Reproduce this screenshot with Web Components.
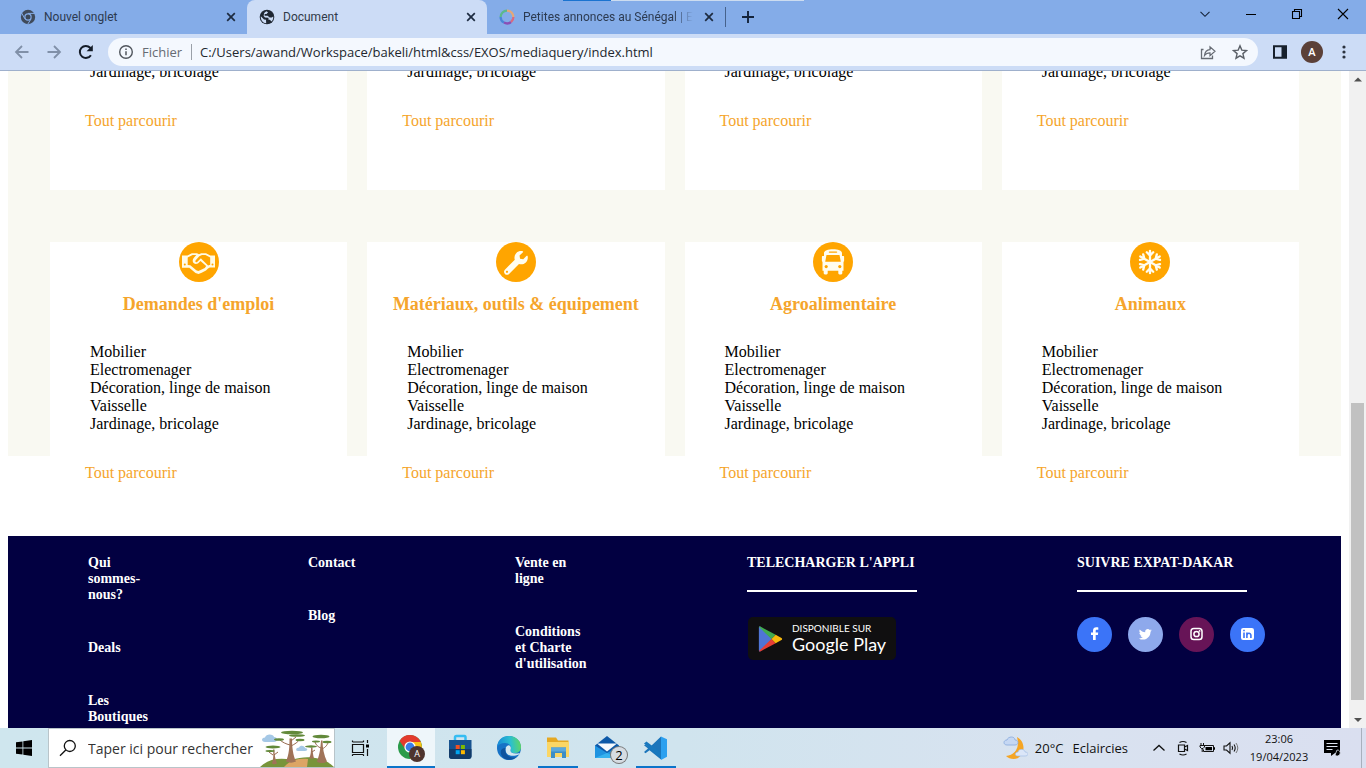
<!DOCTYPE html>
<html lang="fr">
<head>
<meta charset="utf-8">
<title>Document</title>
<style>
html, body { margin: 0; height: 100%; }
body { overflow: hidden; font-family: "Open Sans", "Noto Sans", sans-serif; color: #1f2328; }
</style>
</head>
<body>
<desktop-screen></desktop-screen>
<script>
const ICONS = {
  chromeGray: ['0 0 16 16', '<circle cx="8" cy="8" r="7.2" fill="#3f4a5a"/><circle cx="8" cy="8" r="3.700" fill="#84ace8"/><circle cx="8" cy="8" r="2.5" fill="#3c4858"/><g stroke="#84ace8" stroke-width="1"><path d="M8 4.4h7M4.9 9.8 1.5 3.8M11.1 9.8 7.6 15.4"/></g>'],
  globe: ['0 0 16 16', '<circle cx="8" cy="8" r="7.3" fill="#1f2733"/><path d="M1.8 7.2 5 10.4l2 .3.2 3.6C4 13.8 1.6 11.5 1.8 7.200zM7.300 2.200l1.800 1-1.600 1.700H5.600v1.800h3l2 1.700h2.200l1.400-1c.3 2-.4 3.900-1.700 5.200l-1.600-1.800H9.500V8.800L6 8.400 4.600 7l.6-3z" fill="#ccdcf6"/>'],
  ring: ['0 0 16 16', '<g fill="none" stroke-width="2.300"><path d="M8 1.600A6.400 6.400 0 0 0 1.600 8" stroke="#5bb98c"/><path d="M1.600 8A6.400 6.400 0 0 0 5 13.600" stroke="#4a86d8"/><path d="M5 13.600A6.400 6.400 0 0 0 12 13" stroke="#8a4fb5"/><path d="M12 13A6.400 6.400 0 0 0 14.400 8" stroke="#d86a80"/><path d="M14.400 8A6.400 6.400 0 0 0 8 1.600" stroke="#e3a878"/></g>'],
  close: ['0 0 16 16', '<path d="M4.200 4.200l7.600 7.600m0-7.600-7.600 7.600" stroke="#1d2b40" stroke-width="1.700"/>'],
  plus: ['0 0 16 16', '<path d="M8 2v12M2 8h12" stroke="#13233b" stroke-width="1.900"/>'],
  chevDown: ['0 0 16 16', '<path d="m3.500 5.800 4.500 4.500 4.500-4.500" fill="none" stroke="#142238" stroke-width="1.100"/>'],
  minimize: ['0 0 16 16', '<path d="M3 8.500h10" stroke="#000"/>'],
  restore: ['0 0 16 16', '<path d="M3.500 5.500h7v7h-7zM5.500 5.500v-2h7v7h-2" fill="none" stroke="#000" stroke-width="1.100"/>'],
  winClose: ['0 0 16 16', '<path d="m3 3 10 10m0-10L3 13" stroke="#000" stroke-width="1.100"/>'],
  back: ['0 0 16 16', '<path d="M14.500 8H2m6-6L2 8l6 6" fill="none" stroke="#8090a8" stroke-width="1.800"/>'],
  forward: ['0 0 16 16', '<path d="M1.500 8H14M8 2l6 6-6 6" fill="none" stroke="#8090a8" stroke-width="1.800"/>'],
  reload: ['0 0 16 16', '<path d="M12.900 11.200A6 6 0 1 1 12.200 3.800l1 1" fill="none" stroke="#141c28" stroke-width="2"/><path d="M14.800 1v6.200H8.600z" fill="#141c28"/>'],
  info: ['0 0 16 16', '<circle cx="8" cy="8" r="6.300" fill="none" stroke="#51565d" stroke-width="1.400"/><path d="M8 7.200v4.100M8 4.500v1.500" stroke="#51565d" stroke-width="1.500"/>'],
  share: ['0 0 16 16', '<path d="M3.500 5.500h-2v9h11v-3" fill="none" stroke="#666b73" stroke-width="1.300"/><path d="M4.500 11.500c.4-3.500 2.200-5.600 5.500-5.900V2.800l5 4.500-5 4.300V8.800c-2.400 0-4.100.8-5.500 2.700z" fill="none" stroke="#666b73" stroke-width="1.200"/>'],
  star: ['0 0 16 16', '<path d="m8 1.800 1.800 4.300 4.700.4-3.600 3.100 1.100 4.600L8 11.800l-4 2.400 1.100-4.600-3.600-3.100 4.700-.4z" fill="none" stroke="#5b6068" stroke-width="1.400"/>'],
  side: ['0 0 16 16', '<path d="M2 2.200h12v11.600H2z" fill="none" stroke="#17202c" stroke-width="2"/><path d="M9.500 2h5v12h-5z" fill="#17202c"/>'],
  dots: ['0 0 16 16', '<g fill="#2b333f"><circle cx="8" cy="3" r="1.600"/><circle cx="8" cy="8" r="1.600"/><circle cx="8" cy="13" r="1.600"/></g>'],
  up: ['0 0 16 16', '<path d="m4 10.500 4-4 4 4z" fill="#505050"/>'],
  down: ['0 0 16 16', '<path d="m4 6 4 4 4-4z" fill="#505050"/>'],
  handshake: ['0 0 40 40', '<circle cx="20" cy="20" r="20" fill="orange"/><path d="M3 13.500h5.500l4.300-2.300h5.200l2 1 2.200-1h4.800l4.300 2.300H36v12h-5.200l-1.800 1-2 2-4.300 2.300-3.200 1.300-3-1-6.200-5.300H3z" fill="#fffbe6"/><path d="M8.700 15.600l4.900-2.500h3.700l-2.600 2.800c-2 2.300-.8 5.900 2.200 6 1.600 0 2.600-.8 3.600-2l1-.9 5.700 5-1.400 2-4.200 2-2.300 1-2-.7-6-5-2.600-.4z" fill="orange"/><path d="m23 13.100 3.500-.1 4.700 2.500v7.300l-2.100.6-6.100-5.800-1.100-1.400-4 4c-1.300.3-2-.9-1.200-2l3.600-4z" fill="orange"/><circle cx="5.800" cy="22.500" r="1" fill="orange"/><circle cx="33.500" cy="22.500" r="1" fill="orange"/>'],
  wrench: ['0 0 40 40', '<circle cx="20" cy="20" r="20" fill="orange"/><path transform="translate(8 9) scale(.0465)" fill="#fffdf0" d="M507.730 109.100c-2.240-9.030-13.540-12.090-20.120-5.510l-74.360 74.360-67.880-11.310-11.310-67.880 74.360-74.360c6.620-6.620 3.430-17.900-5.660-20.160-47.380-11.740-99.550.91-136.580 37.930-39.640 39.640-50.550 97.100-34.050 147.200L18.740 402.760c-24.990 24.990-24.990 65.510 0 90.500 24.990 24.990 65.510 24.990 90.500 0l213.210-213.210c50.120 16.710 107.470 5.680 147.370-34.220 37.070-37.070 49.700-89.320 37.910-136.730zM64 472c-13.250 0-24-10.750-24-24 0-13.260 10.750-24 24-24S88 434.740 88 448c0 13.250-10.750 24-24 24z"/>'],
  bus: ['0 0 40 40', '<circle cx="20" cy="20" r="20" fill="orange"/><path d="M11 11c0-2.500 4-3.800 9-3.800s9 1.300 9 3.800v3h1.500c.4 0 .6.300.6.700V19c0 .4-.2.700-.6.700v9h-1.200v2.500c0 1.700-4 1.700-4 0v-2.500h-10.600v2.500c0 1.700-4 1.700-4 0v-2.500H9.500v-9c-.4 0-.6-.3-.6-.7v-4.300c0-.4.2-.7.600-.7H11z" fill="#fffdf0"/><path d="M16.500 9.400h7c1 0 1 1.400 0 1.400h-7c-1 0-1-1.400 0-1.400zM13.500 13h13l1.300 6.800H12.200z" fill="orange"/><circle cx="13.200" cy="24.600" r="1.600" fill="orange"/><circle cx="26.800" cy="24.600" r="1.600" fill="orange"/>'],
  snow: ['0 0 40 40', '<circle cx="20" cy="20" r="20" fill="orange"/><g fill="none" stroke="#fffdf0" stroke-width="2.300" stroke-linecap="round"><path d="M20 8.800v22.400M16.800 10.300l3.200 3.200 3.200-3.200M16.800 29.700l3.200-3.200 3.200 3.200"/><path transform="rotate(60 20 20)" d="M20 8.800v22.400M16.800 10.300l3.200 3.200 3.200-3.200M16.800 29.700l3.200-3.200 3.200 3.200"/><path transform="rotate(120 20 20)" d="M20 8.800v22.400M16.800 10.300l3.200 3.200 3.200-3.200M16.800 29.700l3.200-3.200 3.200 3.200"/></g>'],
  facebook: ['0 0 35 35', '<circle cx="17.500" cy="17.500" r="17.500" fill="#3b74f8"/><path d="M21.300 10.400v2.300h-1.400c-1 0-1.200.5-1.200 1.200v1.600h2.500l-.3 2.500h-2.200V23H16v-5h-2v-2.500h2v-1.900c0-2.200 1.300-3.400 3.300-3.400.9 0 1.700.1 2 .2z" fill="#fff"/>'],
  twitter: ['0 0 35 35', '<circle cx="17.500" cy="17.500" r="17.500" fill="#8ea9ec"/><path transform="translate(9.900 9.600) scale(.62)" fill="#fff" d="M22.460 6c-.77.350-1.600.580-2.460.690.880-.530 1.560-1.370 1.880-2.380-.830.500-1.750.850-2.720 1.050C18.370 4.500 17.260 4 16 4c-2.350 0-4.270 1.920-4.270 4.290 0 .340.040.670.110.980C8.280 9.090 5.110 7.380 3 4.790c-.370.630-.580 1.370-.580 2.150 0 1.490.750 2.810 1.910 3.560-.710 0-1.370-.200-1.950-.500v.030c0 2.080 1.480 3.820 3.440 4.210a4.220 4.220 0 0 1-1.930.070 4.280 4.280 0 0 0 4 2.980 8.521 8.521 0 0 1-5.330 1.840c-.340 0-.680-.020-1.020-.060C3.440 20.290 5.700 21 8.120 21 16 21 20.330 14.460 20.330 8.790c0-.190 0-.370-.010-.560.840-.600 1.560-1.360 2.140-2.230z"/>'],
  instagram: ['0 0 35 35', '<circle cx="17.500" cy="17.500" r="17.500" fill="#671457"/><rect x="12" y="11.500" width="11" height="11" rx="2.800" fill="none" stroke="#fff" stroke-width="1.500"/><circle cx="17.500" cy="17" r="2.600" fill="none" stroke="#fff" stroke-width="1.500"/><circle cx="20.600" cy="13.900" r=".9" fill="#fff"/>'],
  linkedin: ['0 0 35 35', '<circle cx="17.500" cy="17.500" r="17.500" fill="#3b74f8"/><rect x="11" y="11" width="13" height="12" rx="2.200" fill="#fff"/><path d="M14 15.500V21M14 12.800v1.500M16.900 21v-5.500M17 18.200c0-2.400 3.900-2.600 3.900 0V21" fill="none" stroke="#3b74f8" stroke-width="1.600"/>'],
  play: ['0 0 28 30', '<path d="M1 3v24c0 1.200.8 1.700 1.700 1L15 15 2.700 2C1.800 1.300 1 1.800 1 3z" fill="#4f75d6"/><path d="M2.400 1.500 19 10.500 14.500 15 1.300 2.300c.2-.7.600-1 1.100-.8z" fill="#41ab50"/><path d="M2.400 28.500 19 19.500 14.500 15 1.300 27.700c.2.700.600 1 1.100.8z" fill="#e63e36"/><path d="m19 10.500 6.200 3.300c1 .600 1 1.800 0 2.400L19 19.500 14.500 15z" fill="#f7b90c"/>'],
  windows: ['0 0 16 16', '<path d="M0 2.300 6.500 1.400v6.200H0zM7.300 1.300 16 0v7.600H7.300zM0 8.400h6.500v6.200L0 13.700zM7.300 8.400H16V16l-8.700-1.300z" fill="#000"/>'],
  search: ['0 0 18 18', '<circle cx="10.800" cy="7" r="5.500" fill="none" stroke="#111" stroke-width="1.300"/><path d="M6.800 11 1 16.800" stroke="#111" stroke-width="1.300"/>'],
  trees: ['0 0 74 38', '<g fill="#a5c8e6"><path d="M5 13c-4 0-4-4.500 0-4.500C6 4 14 5 14 8c4 0 4 5 0 5zM38 22c-3 0-2-3.500 1-3.500 1-3 6-2 6 .5 3 0 3 3 0 3z"/></g><path d="M0 38c7-7 18-10 32-7 14-5 32-3 42 7z" fill="#78943a"/><path d="M24 38c6-7 14-9 24-8l-1 8z" fill="#dca564"/><g fill="#a07358"><path d="M26 32.500c3-7 3.500-14 3.500-23H32c0 8 1 17 4 23-3 1.500-7 1.500-10 0zM12 34.500c1.500-5 1.500-9 1-14h1.500c0 5 .5 9 2.500 14-1.500 1-4 1-5 0zM57 32.500c3-8 3.500-14 4-21h1.500c0 7 1.500 15 4.500 21-3 2-7 2-10 0zM49 29.500c2-4 2-7 2-11h1.500c0 4 .5 7 1.500 11z"/></g><path d="M31 17c4-2 7-4 8-6M30 16c-4-1-8-3-10-5M31 12l5-4M14 26l4-3M13 26l-4-3M62 20c4-2 5-4 6-6M61 19c-3-1-5-3-6-6M52 23l3-2" stroke="#976a4f" stroke-width="1" fill="none"/><g fill="#62893a"><ellipse cx="32" cy="3.500" rx="11" ry="1.800"/><ellipse cx="37" cy="6.500" rx="8" ry="1.300"/><ellipse cx="19" cy="10.500" rx="5" ry="1.300"/><ellipse cx="40" cy="11" rx="4.500" ry="1.200"/><ellipse cx="13" cy="18" rx="7.500" ry="1.400"/><ellipse cx="10" cy="22" rx="4.500" ry="1"/><ellipse cx="61" cy="7.500" rx="8.500" ry="1.700"/><ellipse cx="56" cy="12.500" rx="4" ry="1.100"/><ellipse cx="67" cy="13" rx="4.500" ry="1.200"/><ellipse cx="51" cy="17.500" rx="6" ry="1.200"/></g>'],
  taskview: ['0 0 18 18', '<path d="M1.500 5.500h11v8h-11zM1.500 3V1.500M12.500 3V1.500M1.500 3h11M1.500 15.500h11M1.500 17v-1.500M12.500 17v-1.500M16.500 1v3M16.500 10v7" fill="none" stroke="#111" stroke-width="1.200"/><path d="M15 5.500h3v3h-3z"/>'],
  chrome: ['0 0 28 28', '<circle cx="13" cy="13" r="12" fill="#2a9b4a"/><path d="M2.600 7A12 12 0 0 1 23.800 8H13c-4 0-6 3-5.200 6.500z" fill="#e33b2e"/><path d="M13 8h10.800A12 12 0 0 1 13 25l5-9z" fill="#fbc116"/><circle cx="13" cy="13" r="5.600" fill="#fff"/><circle cx="13" cy="13" r="4.400" fill="#3a7de8"/>'],
  store: ['0 0 28 28', '<path d="M9 7V3.500C9 2 10 2 10.500 2h8c.5 0 1 0 1 1.500V7" fill="none" stroke="#35bdf2" stroke-width="2.500"/><path d="M3 6h22.500v16c0 2-1 3-3 3H6c-2 0-3-1-3-3z" fill="#175390"/><path d="M3 15h22.500v7c0 2-1 3-3 3H6c-2 0-3-1-3-3z" fill="#123b69"/><path d="M9.700 11h4v4h-4z" fill="#f25022"/><path d="M14.900 11h4v4h-4z" fill="#7fba00"/><path d="M9.700 16.200h4v4h-4z" fill="#00a4ef"/><path d="M14.900 16.200h4v4h-4z" fill="#ffb900"/>'],
  edge: ['0 0 28 28', '<defs><linearGradient id="e" x1="0" y1=".3" x2="1" y2=".2"><stop offset="0" stop-color="#1589d8"/><stop offset=".55" stop-color="#2bbfd0"/><stop offset="1" stop-color="#62d85c"/></linearGradient></defs><circle cx="14" cy="14" r="12" fill="#1672c6"/><path d="M2 13C3 5 8 2 14 2c8 0 12 6 12 11 0 4-3 6-6 6-4 0-5-1.500-4.500-3 2-3-1-7-5.500-7-4 0-7 2-8 4z" fill="url(#e)"/><path d="M15.500 16c-.5 2.500 3 4.500 9.300 3L24 20.500c-7 3-14 1-13.500-5.500.2-2 1.500-3.500 3-3.700 2 .2 3 2.500 2 4.700z" fill="#d4e7ef"/><path d="M10.500 14c-1.500 7 5 11 11.500 9-7 5-14 3-16-3-1-4 1-6 4.500-6z" fill="#0e539e"/>'],
  folder: ['0 0 28 28', '<path d="M3 3.500h9l2 3h10.500V22H3z" fill="#e5a823"/><path d="M3 8h22v15H3z" fill="#fbd665"/><path d="M7 13.500h15V24h-4v-5h-7v5H7z" fill="#3d8ec6"/><path d="M7 13.500h15v4H7z" fill="#5ba8dc"/>'],
  mail: ['0 0 28 28', '<path d="M2 11.500 14 2l12 9.500V24H2z" fill="#0d59a8"/><path d="M4 9.500h20l-10 8z" fill="#f6fafd"/><path d="M2 11.500 14 19 26 11.500V24H2z" fill="#1f93e0"/><path d="M2 24 14 19l12 5z" fill="#36b2ef"/>'],
  vscode: ['0 0 28 28', '<path d="M19 2.500 7.500 13.500l-4-3L2 11.300l4 3.300-4 3.500 1.500 1.200 4-3L19 25.500z" fill="#1b75bb"/><path d="M2 9.500 4.500 7.500 19.500 19v6z" fill="#1878be"/><path d="m19 2.500 6 2.700v17.500L19 26z" fill="#2ca0ef"/>'],
  weather: ['0 0 26 26', '<path d="M15 2c8 4 9 16 1 21-4 2-9 1-12-2 9-1 14-8 11-19z" fill="#f5a524"/><path d="M5 10c-4 0-4-5 0-5 1-4 8-4 8 0 4 0 4 5 0 5z" fill="#c5d7f3" stroke="#86a8dc" stroke-width=".8"/><path d="M16 21c-4 0-3-4 0-4 1-4 7-3 7 0 4 0 4 4 0 4z" fill="#dbe6f8" stroke="#9ab8e4" stroke-width=".6"/>'],
  chevUp: ['0 0 16 16', '<path d="m2.500 10.500 5.500-5 5.500 5" fill="none" stroke="#111" stroke-width="1.300"/>'],
  meet: ['0 0 16 16', '<path d="M3.500 5h6v6.500h-6zM9.500 7l3-1.500v5l-3-1.500M4.500 2.500q3.500-2 7 0M4.500 14q3.500 2 7 0" fill="none" stroke="#111" stroke-width="1.200"/>'],
  battery: ['0 0 16 16', '<path d="M5 5.500h9.500v6H4.500v-2M2 3v2M4.500 3v2M1 5.500h4.500v1.500l-1.500 1.500H2.500L1 7zM3.200 8.500v3.500" fill="none" stroke="#111"/><path d="M6.500 7h6.500v3.200H6.500zM14.800 7.300h1.200v2.400h-1.200z"/>'],
  volume: ['0 0 16 16', '<path d="M1 6h2.500L7 2.800v10.400L3.500 10H1zM9 6q1.200 2 0 4M11 4.500q2.400 3.500 0 7" fill="none" stroke="#111" stroke-width="1.100"/><path d="M13 3q3.600 5 0 10" fill="none" stroke="#777"/>'],
  notif: ['0 0 18 18', '<path d="M1 1h16v13h-5l-4 3v-3H1z"/><path d="M3.500 4.500h11M3.500 7.500h11M3.500 10.500h6" stroke="#dfe5f0" stroke-width="1.100"/><path d="M12 16a3 3 0 1 0 2-5z" fill="#000" stroke="#dfe5f0" stroke-width=".8"/>']
};

function define(name, css, html) {
  const template = document.createElement('template');
  template.innerHTML = `<style>*{box-sizing:border-box}button{border:0;background:none;padding:0;margin:0;font:inherit;color:inherit;display:flex;align-items:center;justify-content:center}input{border:0;background:none;padding:0;margin:0;outline:0;color:inherit;font:inherit;min-width:0}a{text-decoration:none;color:inherit}ul{list-style:none;margin:0;padding:0}${css}</style>${html}`;
  customElements.define(name, class extends HTMLElement {
    constructor() {
      super();
      this.attachShadow({ mode: 'open' }).append(template.content.cloneNode(true));
    }
  });
}

customElements.define('ui-icon', class extends HTMLElement {
  connectedCallback() {
    if (this.shadowRoot) return;
    const [box, shapes] = ICONS[this.getAttribute('name')];
    this.attachShadow({ mode: 'open' }).innerHTML =
      `<style>:host{display:block;flex:none;width:var(--size,16px);height:var(--size,16px)}svg{display:block;width:100%;height:100%}</style><svg viewBox="${box}" aria-hidden="true">${shapes}</svg>`;
  }
});

define('browser-tab', `
:host{display:flex;flex:0 1 240px;min-width:0;box-sizing:border-box;align-items:center;height:34px;padding:0 8px 0 12px;font-family:Roboto,"Open Sans",sans-serif;font-size:12px;color:#2c3a50}
:host([active]){background:#ccdcf6;border-radius:8px 8px 0 0;color:#303a48}
.label{flex:1;min-width:0;justify-content:flex-start;margin:0 8px;height:24px;overflow:hidden;white-space:nowrap}
:host([fade]) .label{mask-image:linear-gradient(to right,#000 88%,transparent)}
.label slot{display:block}`,
`<slot name="icon"></slot><button class="label" role="tab"><slot></slot></button><button aria-label="Fermer l'onglet"><ui-icon name="close"></ui-icon></button>`);

define('tab-strip', `
:host{display:flex;height:34px;background:linear-gradient(to right,transparent 563px,#1a73d0 563px,#1a73d0 611px,#ccdcf0 611px,#ccdcf0 804px,transparent 804px) top/100% 1px no-repeat,#84ace8}
browser-tab:first-of-type{flex-basis:247px;padding-left:20px}
browser-tab[fade]{flex-basis:238px}
.add{width:44px;height:34px}
.line{width:1px;height:20px;margin-top:7px;background:#46628c}
.win{display:flex;margin-left:auto}
.win button{width:46px;height:28px}`,
`<browser-tab><ui-icon slot="icon" name="chromeGray"></ui-icon>Nouvel onglet</browser-tab>
<browser-tab active><ui-icon slot="icon" name="globe"></ui-icon>Document</browser-tab>
<browser-tab fade><ui-icon slot="icon" name="ring"></ui-icon>Petites annonces au Sénégal | Exp</browser-tab>
<span class="line"></span><button class="add" aria-label="Nouvel onglet"><ui-icon name="plus"></ui-icon></button>
<div class="win"><button aria-label="Rechercher"><ui-icon name="chevDown"></ui-icon></button><button aria-label="Réduire"><ui-icon name="minimize"></ui-icon></button><button aria-label="Restaurer"><ui-icon name="restore"></ui-icon></button><button aria-label="Fermer"><ui-icon name="winClose"></ui-icon></button></div>`);

define('browser-toolbar', `
:host{display:flex;box-sizing:border-box;align-items:center;height:37px;padding:0 6px;background:#ccdcf6;border-bottom:1px solid #9fb0cc}
button{width:32px;height:32px}
.box{display:flex;flex:1;align-items:center;height:28px;border-radius:14px;background:#f4f8fe;margin:0 6px;padding:0 2px 0 10px;font-size:13px}
label{color:#666b73;margin:0 7px 0 8px;display:flex;align-items:center;width:42px}
.sep{width:1px;height:16px;background:#9aa0a8}
input{flex:1;height:28px;margin-left:8px;color:#22272e}
.avatar span{width:22px;height:22px;border-radius:11px;background:#5b4038;color:#fff;font-size:11px;line-height:22px;font-weight:600}`,
`<button aria-label="Retour"><ui-icon name="back"></ui-icon></button><button aria-label="Avancer"><ui-icon name="forward"></ui-icon></button><button aria-label="Actualiser"><ui-icon name="reload"></ui-icon></button>
<div class="box"><ui-icon name="info"></ui-icon><label for="url">Fichier</label><span class="sep"></span><input id="url" value="C:/Users/awand/Workspace/bakeli/html&amp;css/EXOS/mediaquery/index.html">
<button aria-label="Partager"><ui-icon name="share"></ui-icon></button><button aria-label="Favori"><ui-icon name="star"></ui-icon></button></div>
<button aria-label="Panneau latéral"><ui-icon name="side"></ui-icon></button><button class="avatar" aria-label="Profil"><span>A</span></button><button aria-label="Menu"><ui-icon name="dots"></ui-icon></button>`);

define('category-card', `
:host{display:block;background:#fff;padding-bottom:60px;font-size:16px;line-height:18px;color:#000}
::slotted(ui-icon){--size:40px;margin:0 auto}
h3{margin:12px 0 28px;font-size:18px;line-height:21px;color:#f5a52c;text-align:center}
:host([continued]) h3{display:none}
ul{padding-left:40px}
a{display:block;margin:31px 0 0 35px;color:#f5a52c}`,
`<slot name="icon"></slot><h3><slot name="title"></slot></h3><ul><slot></slot></ul><a href="#">Tout parcourir</a>`);

define('list-line', `:host{display:block}`, `<slot></slot>`);

define('category-section', `
:host{display:block;background:#f9f9f2;padding:0 42px;margin-top:-8px}
.row{display:grid;grid-template-columns:repeat(4,1fr);gap:20px}
.row + .row{margin:52px 0 -86px}`,
`<div class="row">${'<category-card continued><list-line>Jardinage, bricolage</list-line></category-card>'.repeat(4)}</div>
<div class="row">${[['handshake', "Demandes d'emploi"], ['wrench', 'Matériaux, outils &amp; équipement'], ['bus', 'Agroalimentaire'], ['snow', 'Animaux']].map(([icon, title]) =>
`<category-card><ui-icon slot="icon" name="${icon}"></ui-icon><span slot="title">${title}</span>${['Mobilier', 'Electromenager', 'Décoration, linge de maison', 'Vaisselle', 'Jardinage, bricolage'].map(t => `<list-line>${t}</list-line>`).join('')}</category-card>`).join('')}</div>`);

define('site-footer', `
:host{display:grid;grid-template-columns:220fr 207fr 232fr 330fr 264fr;flex:1;margin-top:80px;padding:19px 0 0 80px;background:#020041;color:#fff;font-size:14px;line-height:16px;font-weight:700}
ul{display:flex;flex-direction:column;gap:37px;width:74px}
h4{margin:0;font-size:14px;line-height:16px}
hr{width:170px;height:2px;border:0;background:#fff;margin:19px 0 25px}
.badge{display:flex;align-items:center;gap:7px;width:148px;height:43px;margin-left:1px;padding-left:9px;border-radius:5px;background:#100f10;font-family:Lato,sans-serif;font-weight:400}
.badge ui-icon{--size:28px}
.badge small,.badge b{display:block;white-space:nowrap}
.badge small{font-size:10px;line-height:11px}
.badge b{font-size:18px;line-height:21px;font-weight:400}
.social{display:flex;gap:16px}
.social ui-icon{--size:35px}`,
`<ul><li><a href="#">Qui sommes-nous?</a></li><li><a href="#">Deals</a></li><li><a href="#">Les Boutiques</a></li></ul>
<ul><li><a href="#">Contact</a></li><li><a href="#">Blog</a></li></ul>
<ul><li><a href="#">Vente en ligne</a></li><li><a href="#">Conditions et Charte d'utilisation</a></li></ul>
<section><h4>TELECHARGER L'APPLI</h4><hr><a class="badge" href="#"><ui-icon name="play"></ui-icon><span><small>DISPONIBLE SUR</small><b>Google Play</b></span></a></section>
<section><h4>SUIVRE EXPAT-DAKAR</h4><hr><div class="social"><a href="#" aria-label="Facebook"><ui-icon name="facebook"></ui-icon></a><a href="#" aria-label="Twitter"><ui-icon name="twitter"></ui-icon></a><a href="#" aria-label="Instagram"><ui-icon name="instagram"></ui-icon></a><a href="#" aria-label="LinkedIn"><ui-icon name="linkedin"></ui-icon></a></div></section>`);

define('scroll-bar', `
:host{display:flex;flex-direction:column;align-items:center;width:17px;background:#f1f1f1}
.track{flex:1;width:13px;display:flex;flex-direction:column}
.track::before{content:"";flex:316}
.track::after{content:"";flex:12}
.thumb{flex:297;background:#c1c1c1}`,
`<ui-icon name="up"></ui-icon><div class="track"><div class="thumb"></div></div><ui-icon name="down"></ui-icon>`);

define('page-view', `
:host{display:flex;flex:1;min-height:0;background:#fff;overflow:hidden;font-family:"Liberation Serif",serif}
main{display:flex;flex-direction:column;flex:1;min-width:0;padding:0 8px}`,
`<main><category-section></category-section><site-footer></site-footer></main><scroll-bar></scroll-bar>`);

define('task-button', `
:host{display:block;width:49px}
button{position:relative;width:100%;height:40px}
:host([open]) button{background:linear-gradient(#0b74ca,#0b74ca) bottom/40px 2px no-repeat}
:host([active]) button{background:linear-gradient(#0b74ca,#0b74ca) bottom/48px 2px no-repeat,linear-gradient(#eef6fa,#eef6fa) center/48px 40px no-repeat}
::slotted(span){position:absolute;left:29px;top:19px;width:16px;height:16px;border-radius:8px;font-size:13px;line-height:16px;background:#d6dce2;box-shadow:0 0 0 1px #777;color:#000}
:host([active]) ::slotted(span){left:23px;top:18px;background:#4e342e;color:#fff;font-size:9px;box-shadow:none}`,
`<button><slot name="icon"></slot><slot></slot></button>`);

define('task-bar', `
:host{display:flex;align-items:center;height:40px;background:linear-gradient(to right,#cfe6ee,#d0e4ee 50%,#d9e2f0 80%,#dadff0);color:#111;font-size:14px}
button{height:40px}
.start{width:48px}
.search{display:flex;align-items:center;width:287px;height:40px;background:#fff;border:1px solid #b9c4c9;padding-left:10px}
.search input{flex:1;margin-left:11px}
.search input::placeholder{color:#333;opacity:1}
.search ui-icon{--size:18px}
.search .art{--size:74px;height:38px}
.view{width:50px;margin-right:1px}
.view ui-icon{--size:18px}
task-button ui-icon{--size:28px}
.tray{display:flex;align-items:center;margin-left:auto}
.weather{gap:7px;margin-right:19px;white-space:pre;font-size:13px}
.weather ui-icon{--size:26px}
.weather b{font-weight:400;margin-left:2px}
.tray .s{width:24px}
.clock{width:72px;flex-direction:column;font-size:11px;line-height:18px}
.n{width:34px;margin-right:12px}
.n ui-icon{--size:18px}
.edge{width:1px;height:40px;background:#a8b0bd;margin-right:4px}`,
`<button class="start" aria-label="Démarrer"><ui-icon name="windows"></ui-icon></button>
<div class="search"><ui-icon name="search"></ui-icon><input aria-label="Recherche" placeholder="Taper ici pour rechercher"><ui-icon class="art" name="trees"></ui-icon></div>
<button class="view" aria-label="Vue des tâches"><ui-icon name="taskview"></ui-icon></button>
<task-button active><ui-icon slot="icon" name="chrome"></ui-icon><span>A</span></task-button>
<task-button><ui-icon slot="icon" name="store"></ui-icon></task-button>
<task-button><ui-icon slot="icon" name="edge"></ui-icon></task-button>
<task-button open><ui-icon slot="icon" name="folder"></ui-icon></task-button>
<task-button><ui-icon slot="icon" name="mail"></ui-icon><span>2</span></task-button>
<task-button open><ui-icon slot="icon" name="vscode"></ui-icon></task-button>
<div class="tray"><button class="weather"><ui-icon name="weather"></ui-icon><span>20°C</span><b>Eclaircies</b></button>
<button class="s" aria-label="Icônes cachées"><ui-icon name="chevUp"></ui-icon></button><button class="s" aria-label="Caméra"><ui-icon name="meet"></ui-icon></button><button class="s" aria-label="Batterie"><ui-icon name="battery"></ui-icon></button><button class="s" aria-label="Volume"><ui-icon name="volume"></ui-icon></button>
<button class="clock"><span>23:06</span><span>19/04/2023</span></button><button class="n" aria-label="Notifications"><ui-icon name="notif"></ui-icon></button><span class="edge"></span></div>`);

define('desktop-screen', `:host{display:flex;flex-direction:column;height:100vh}tab-strip,browser-toolbar,task-bar{flex:none}`,
`<tab-strip></tab-strip><browser-toolbar></browser-toolbar><page-view></page-view><task-bar></task-bar>`);
</script>
</body>
</html>
